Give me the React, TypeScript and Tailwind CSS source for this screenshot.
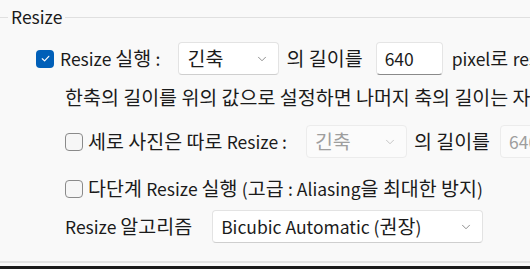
import type { ReactNode } from "react";
import { ChevronDown } from "lucide-react";

const font = { fontFamily: '"Noto Sans CJK KR", "Noto Sans", sans-serif' };

// 한글 구간은 원본(맑은 고딕)처럼 조금 크게
function K({ children }: { children: ReactNode }) {
  return <span className="text-[19.5px]">{children}</span>;
}

function Check({ checked }: { checked?: boolean }) {
  return checked ? (
    <span className="flex h-[18px] w-[18px] shrink-0 items-center justify-center rounded-[4px] bg-[#005fb8]">
      <svg viewBox="0 0 12 12" className="h-[11px] w-[11px]" fill="none">
        <path d="M2.5 6.3 5 8.6 9.6 3.6" stroke="#fff" strokeWidth="1.3" strokeLinecap="round" strokeLinejoin="round" />
      </svg>
    </span>
  ) : (
    <span className="h-[18px] w-[18px] shrink-0 rounded-[4px] border border-[#8a8a8a] bg-[#f6f6f6]" />
  );
}

function Select({ children, width, disabled }: { children: ReactNode; width: string; disabled?: boolean }) {
  return (
    <div
      className={`flex h-[33px] shrink-0 items-center justify-between rounded-[4px] border pl-[8px] pr-[9px] ${width} ${
        disabled ? "border-[#ececec] bg-[#fbfbfb] text-[#9e9e9e]" : "border-[#e3e3e3] border-b-[#cfcfcf] bg-white text-[#1b1b1b]"
      }`}
    >
      <span>{children}</span>
      <ChevronDown className={`h-[14px] w-[14px] ${disabled ? "text-[#b5b5b5]" : "text-[#6b6b6b]"}`} strokeWidth={1.3} />
    </div>
  );
}

function Input({ value, width, disabled }: { value: string; width: string; disabled?: boolean }) {
  return (
    <div
      className={`flex h-[33px] shrink-0 items-center rounded-[4px] border pl-[8px] ${width} ${
        disabled ? "border-[#ececec] bg-[#fbfbfb] text-[#9e9e9e]" : "border-[#e5e5e5] border-b-[#8a8a8a] bg-white text-[#1b1b1b]"
      }`}
    >
      {value}
    </div>
  );
}

export default function App() {
  return (
    <div
      className="flex h-[269px] w-[530px] flex-col overflow-hidden whitespace-nowrap bg-[#f9f9f9] text-[17.5px] leading-[24px] text-[#1b1b1b]"
      style={font}
    >
      {/* 그룹 제목 */}
      <div className="mt-[6px] flex h-[22px] items-center">
        <div className="h-px w-[8px] bg-[#e0e0e0]" />
        <span className="px-[3px]">Resize</span>
        <div className="h-px flex-1 bg-[#e0e0e0]" />
      </div>

      <div className="flex flex-1 flex-col border-b-2 border-[#e3e3e3]">
        {/* Resize 실행 */}
        <div className="mt-[14px] flex h-[33px] items-center pl-[36px]">
          <Check checked />
          <span className="ml-[6px]">
            Resize <K>실행 </K>:
          </span>
          <Select width="ml-[18px] w-[101px]">
            <K>긴축</K>
          </Select>
          <span className="ml-[7px]">
            <K>의 길이를</K>
          </span>
          <Input value="640" width="ml-[13px] w-[67px]" />
          <span className="ml-[9px]">
            pixel<K>로 </K>resize
          </span>
        </div>

        <div className="mt-[5px] flex h-[33px] items-center pl-[65px]">
          <K>한축의 길이를 위의 값으로 설정하면 나머지 축의 길이는 자동으로 계산됩니다</K>
        </div>

        {/* 세로 사진 */}
        <div className="mt-[12px] flex h-[33px] items-center pl-[65px]">
          <Check />
          <span className="ml-[5px]">
            <K>세로 사진은 따로 </K>Resize :
          </span>
          <Select width="ml-[19px] w-[101px]" disabled>
            <K>긴축</K>
          </Select>
          <span className="ml-[7px]">
            <K>의 길이를</K>
          </span>
          <Input value="640" width="ml-[10px] w-[67px]" disabled />
        </div>

        {/* 다단계 */}
        <div className="mt-[14px] flex h-[33px] items-center pl-[65px]">
          <Check />
          <span className="ml-[5px]">
            <K>다단계 </K>Resize <K>실행 </K>(<K>고급 </K>: Aliasing<K>을 최대한 방지</K>)
          </span>
        </div>

        {/* 알고리즘 */}
        <div className="mt-[5px] flex h-[33px] items-center pl-[65px]">
          <span>
            Resize <K>알고리즘</K>
          </span>
          <Select width="ml-[20px] w-[271px]">
            Bicubic Automatic (<K>권장</K>)
          </Select>
        </div>
      </div>

      <div className="mt-[3px] h-[3px] bg-[#1b1b1b]" />
    </div>
  );
}
